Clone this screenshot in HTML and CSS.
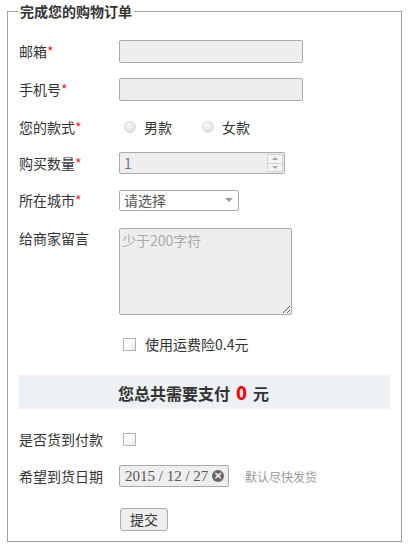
FILE: index.html
```html
<!DOCTYPE html>
<html lang="zh-CN">
<head>
<meta charset="utf-8">
<title>完成您的购物订单</title>
<link rel="stylesheet" href="styles.css">
</head>
<body>
<form class="order">
  <fieldset class="box">
    <legend class="title">完成您的购物订单</legend>

    <div class="row r1">
      <label class="lbl">邮箱<em>*</em></label>
      <input class="field w-long" type="text">
    </div>

    <div class="row r2">
      <label class="lbl">手机号<em>*</em></label>
      <input class="field w-long" type="text">
    </div>

    <div class="row r3">
      <span class="lbl">您的款式<em>*</em></span>
      <label class="opt"><input class="radio" type="radio" name="style">男款</label>
      <label class="opt opt-2"><input class="radio" type="radio" name="style">女款</label>
    </div>

    <div class="row r4">
      <label class="lbl">购买数量<em>*</em></label>
      <div class="num">
        <span class="num-val">1</span>
        <span class="spin"><i class="up"></i><i class="down"></i></span>
      </div>
    </div>

    <div class="row r5">
      <label class="lbl">所在城市<em>*</em></label>
      <div class="select"><span>请选择</span><i class="caret"></i></div>
    </div>

    <div class="row r6">
      <label class="lbl">给商家留言</label>
      <textarea class="note" placeholder="少于200字符"></textarea>
    </div>

    <div class="row r7 indent">
      <label class="opt"><input class="check" type="checkbox">使用运费险0.4元</label>
    </div>

    <div class="total">您总共需要支付<strong class="amount">0</strong>元</div>

    <div class="row r8">
      <span class="lbl">是否货到付款</span>
      <input class="check" type="checkbox">
    </div>

    <div class="row r9">
      <span class="lbl">希望到货日期</span>
      <div class="date"><span>2015 / 12 / 27</span><i class="clear">×</i></div>
      <span class="hint">默认尽快发货</span>
    </div>

    <div class="row r10 indent">
      <button class="submit" type="button">提交</button>
    </div>
  </fieldset>
</form>
</body>
</html>
```

FILE: styles.css
```css
html, body {
  margin: 0;
  padding: 0;
  background: #fff;
}

body {
  font-family: "Noto Sans CJK SC", "Noto Sans", sans-serif;
  font-size: 14px;
  color: #333;
}

.order {
  margin: 0;
  padding: 3px 0 0 0;
}

.box {
  margin: 0 7px 0 7px;
  padding: 13px 11px 11px 11px;
  border: 1px solid #a0a0a0;
  min-width: 0;
}

.title {
  margin-left: -1px;
  padding: 0 2px;
  font-size: 14px;
  font-weight: bold;
  line-height: 16px;
  color: #333;
}

.row {
  display: flex;
  align-items: center;
}

.r1, .r2, .r3 { height: 38px; }
.r4 { height: 34px; }
.r5 { height: 40px; }
.r6 { margin-top: 8px; align-items: flex-start; }
.r7 { margin-top: 20px; height: 18px; }
.r8 { margin-top: 20px; height: 20px; }
.r9 { margin-top: 16px; height: 22px; }
.r10 { margin-top: 21px; height: 22px; }

.indent { padding-left: 100px; }

.lbl {
  width: 100px;
  flex: none;
  line-height: 20px;
  white-space: nowrap;
}

.lbl em {
  font-style: normal;
  color: #f22;
}

.field {
  box-sizing: border-box;
  height: 23px;
  border: 1px solid #ababab;
  border-radius: 2px;
  background: #eee;
  margin: 0;
  padding: 0 4px;
  font: inherit;
}

.w-long { width: 184px; }

.opt {
  display: flex;
  align-items: center;
  line-height: 20px;
}

.opt-2 { margin-left: 25px; }

.radio {
  appearance: none;
  -webkit-appearance: none;
  box-sizing: border-box;
  width: 12px;
  height: 12px;
  margin: 0 8px 0 5px;
  border-radius: 50%;
  border: 1px solid #dcdcdc;
  background: radial-gradient(circle at 40% 35%, #fafafa 0%, #e6e6e6 55%, #d2d2d2 100%);
}

.check {
  appearance: none;
  -webkit-appearance: none;
  box-sizing: border-box;
  width: 13px;
  height: 13px;
  margin: 0 9px 0 4px;
  border: 1px solid #b4b4b4;
  background: linear-gradient(135deg, #fff 0%, #fff 45%, #e8e8e8 100%);
}

.num {
  box-sizing: border-box;
  width: 166px;
  height: 22px;
  border: 1px solid #ababab;
  border-radius: 2px;
  background: #eee;
  display: flex;
  align-items: center;
  justify-content: space-between;
  padding: 0 0 0 4px;
}

.num-val {
  color: #6c7a8c;
  line-height: 20px;
}

.spin {
  box-sizing: border-box;
  width: 16px;
  height: 18px;
  margin-right: 1px;
  border: 1px solid #d4d4d4;
  background: #f4f4f4;
  display: flex;
  flex-direction: column;
}

.spin i {
  flex: 1;
  position: relative;
}

.spin .up { border-bottom: 1px solid #d4d4d4; }

.spin i::after {
  content: "";
  position: absolute;
  left: 50%;
  top: 50%;
  margin-left: -3px;
  border-left: 3px solid transparent;
  border-right: 3px solid transparent;
}

.spin .up::after {
  margin-top: -2px;
  border-bottom: 3px solid #a8a8a8;
}

.spin .down::after {
  margin-top: -1px;
  border-top: 3px solid #a8a8a8;
}

.select {
  box-sizing: border-box;
  width: 120px;
  height: 21px;
  border: 1px solid #ababab;
  border-radius: 2px;
  background: #fff;
  display: flex;
  align-items: center;
  justify-content: space-between;
  padding: 0 5px 0 4px;
  color: #555;
  line-height: 19px;
}

.caret {
  width: 0;
  height: 0;
  border-left: 4px solid transparent;
  border-right: 4px solid transparent;
  border-top: 4px solid #999;
}

.note {
  box-sizing: border-box;
  width: 173px;
  height: 87px;
  margin: 0;
  padding: 1px 2px;
  border: 1px solid #ababab;
  border-radius: 2px;
  background: #eee;
  font: inherit;
  line-height: 20px;
  color: #333;
}

.note::placeholder {
  color: #aaa;
}

.total {
  margin-top: 22px;
  height: 34px;
  line-height: 34px;
  background: #edf1f4;
  text-align: center;
  padding-right: 22px;
  font-size: 16px;
  font-weight: bold;
  color: #333;
}

.amount {
  color: #f00;
  font-size: 18px;
  margin: 0 6px;
}

.date {
  box-sizing: border-box;
  width: 110px;
  height: 22px;
  border: 1px solid #ababab;
  border-radius: 2px;
  background: #eee;
  display: flex;
  align-items: center;
  justify-content: space-between;
  padding: 0 4px 0 5px;
  font-family: "Liberation Serif", serif;
  font-size: 15px;
  color: #555;
}

.clear {
  width: 12px;
  height: 12px;
  border-radius: 50%;
  background: #666;
  color: #fff;
  font-style: normal;
  font-family: "DejaVu Sans", sans-serif;
  font-weight: bold;
  font-size: 11px;
  line-height: 12px;
  text-align: center;
}

.hint {
  margin-left: 16px;
  font-size: 12px;
  color: #999;
}

.submit {
  box-sizing: border-box;
  width: 48px;
  height: 23px;
  margin-left: 1px;
  border: 1px solid #aaa;
  border-radius: 3px;
  background: #eee;
  font: inherit;
  color: #333;
  line-height: 20px;
  padding: 0;
}
```
